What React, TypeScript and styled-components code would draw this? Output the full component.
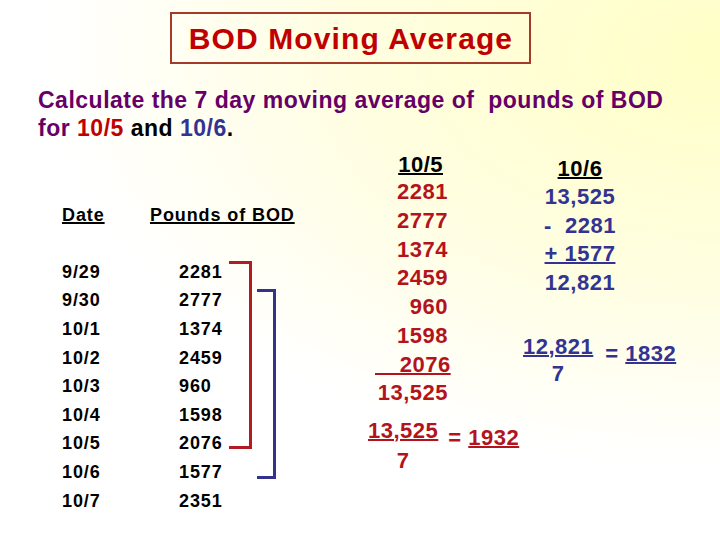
import React from "react";
import styled, { createGlobalStyle } from "styled-components";

const RED = "#b3141c";
const BLUE = "#333391";

const GlobalStyle = createGlobalStyle`
  html, body {
    margin: 0;
    padding: 0;
  }
  body {
    font-family: "Liberation Sans", Arial, sans-serif;
  }
`;

const Slide = styled.div`
  width: 720px;
  height: 540px;
  overflow: hidden;
  background: radial-gradient(
    ellipse 110% 90% at 100% 10%,
    #ffffc6 0%,
    #fffee0 45%,
    #ffffff 85%
  );
`;

const TitleBox = styled.div`
  box-sizing: border-box;
  width: 361px;
  height: 52px;
  margin: 12px 0 0 170px;
  padding: 2px 0 0 1px;
  border: 2px solid #a43a2a;
  display: flex;
  align-items: center;
  justify-content: center;
  color: #c00000;
  font-size: 30px;
  font-weight: bold;
  letter-spacing: 1.1px;
`;

const Prompt = styled.p`
  margin: 22px 0 0 38px;
  font-size: 23px;
  line-height: 28px;
  font-weight: bold;
  letter-spacing: 0.5px;
  color: #660066;
  white-space: pre;
`;

const Tone = styled.span<{ $color: string }>`
  color: ${(p) => p.$color};
`;

const Main = styled.div`
  display: flex;
  align-items: flex-start;
  margin-top: 9.6px;
  padding-left: 62px;
  font-weight: bold;
`;

/* left table: date | pounds | red bracket | gap | blue bracket */
const Table = styled.div`
  display: grid;
  grid-template-columns: 88px 79px 23px 5px 19px;
  grid-auto-rows: 28.6px;
  padding-top: 49px;
  font-size: 18px;
  line-height: 28.6px;
  letter-spacing: 0.9px;
  color: #000;
`;

const Cell = styled.div<{ $row: number; $col: number; $head?: boolean }>`
  grid-row: ${(p) => p.$row};
  grid-column: ${(p) => p.$col};
  padding-left: ${(p) => (p.$col === 2 && !p.$head ? "29px" : "0")};
  text-decoration: ${(p) => (p.$head ? "underline" : "none")};
  text-decoration-thickness: 1.5px;
  white-space: nowrap;
`;

const Bracket = styled.div<{ $color: string; $col: number; $rows: string; $bottom: number }>`
  grid-column: ${(p) => p.$col};
  grid-row: ${(p) => p.$rows};
  margin: 3px 0 ${(p) => p.$bottom}px;
  border: 3px solid ${(p) => p.$color};
  border-left: none;
`;

const SumArea = styled.div`
  flex-shrink: 0;
  width: 154px;
  margin-left: 92px;
  color: ${RED};
  font-size: 22px;
  letter-spacing: 0.5px;
`;

const SumStack = styled.div`
  width: 73px;
  margin-left: 7px;
  text-align: right;
`;

const DiffArea = styled.div`
  flex-shrink: 0;
  padding-top: 4.5px;
  color: ${BLUE};
  font-size: 22px;
  letter-spacing: 0.5px;
`;

const DiffStack = styled.div`
  width: 76px;
  margin-left: 20px;
  text-align: center;
`;

const ColHead = styled.div<{ $inset?: number }>`
  line-height: 26.7px;
  color: #000;
  padding-right: ${(p) => p.$inset ?? 0}px;
  text-decoration: underline;
  text-decoration-thickness: 2px;
`;

const Line = styled.div<{ $rule?: boolean }>`
  line-height: 28.7px;
  white-space: pre;
  text-decoration: ${(p) => (p.$rule ? "underline" : "none")};
  text-decoration-thickness: 2px;
`;

const Fraction = styled.div<{ $gap: number; $lead: number; $indent?: number }>`
  display: flex;
  align-items: flex-start;
  margin-top: ${(p) => p.$gap}px;
  margin-left: ${(p) => p.$indent ?? 0}px;
  line-height: ${(p) => p.$lead}px;
  white-space: nowrap;
`;

const FracStack = styled.div`
  display: flex;
  flex-direction: column;
  align-items: center;
`;

const Numer = styled.span`
  text-decoration: underline;
  text-decoration-thickness: 2px;
`;

const Result = styled.div<{ $left: number }>`
  margin: 7px 0 0 ${(p) => p.$left}px;
  white-space: pre;
`;

const rows = [
  ["9/29", "2281"],
  ["9/30", "2777"],
  ["10/1", "1374"],
  ["10/2", "2459"],
  ["10/3", "960"],
  ["10/4", "1598"],
  ["10/5", "2076"],
  ["10/6", "1577"],
  ["10/7", "2351"],
];

const sumLines = ["2281", "2777", "1374", "2459", "960", "1598"];

export default function App() {
  return (
    <Slide>
      <GlobalStyle />
      <TitleBox>BOD Moving Average</TitleBox>

      <Prompt>
        {"Calculate the 7 day moving average of  pounds of BOD"}
        <br />
        {"for "}
        <Tone $color="#c00000">10/5</Tone>
        <Tone $color="#000"> and </Tone>
        <Tone $color={BLUE}>10/6</Tone>
        <Tone $color="#000">.</Tone>
      </Prompt>

      <Main>
        <Table>
          <Cell $row={1} $col={1} $head>
            Date
          </Cell>
          <Cell $row={1} $col={2} $head>
            Pounds of BOD
          </Cell>
          {rows.map(([d, v], i) => (
            <React.Fragment key={d}>
              <Cell $row={i + 3} $col={1}>
                {d}
              </Cell>
              <Cell $row={i + 3} $col={2}>
                {v}
              </Cell>
            </React.Fragment>
          ))}
          <Bracket $color="#b01c22" $col={3} $rows="3 / 10" $bottom={9} />
          <Bracket $color="#33338a" $col={5} $rows="4 / 11" $bottom={8} />
        </Table>

        <SumArea>
          <SumStack>
            <ColHead $inset={5}>10/5</ColHead>
            {sumLines.map((n) => (
              <Line key={n}>{n}</Line>
            ))}
            <Line $rule>{"   \u20092076"}</Line>
            <Line>13,525</Line>
          </SumStack>
          <Fraction $gap={7.6} $lead={30}>
            <FracStack>
              <Numer>13,525</Numer>
              <span>7</span>
            </FracStack>
            <Result $left={10}>
              {"= "}
              <Numer>1932</Numer>
            </Result>
          </Fraction>
        </SumArea>

        <DiffArea>
          <DiffStack>
            <ColHead>10/6</ColHead>
            <Line>13,525</Line>
            <Line>{"-  2281"}</Line>
            <Line $rule>+ 1577</Line>
            <Line>12,821</Line>
          </DiffStack>
          <Fraction $gap={35} $lead={27} $indent={1}>
            <FracStack>
              <Numer>12,821</Numer>
              <span>7</span>
            </FracStack>
            <Result $left={12}>
              {"= "}
              <Numer>1832</Numer>
            </Result>
          </Fraction>
        </DiffArea>
      </Main>
    </Slide>
  );
}
